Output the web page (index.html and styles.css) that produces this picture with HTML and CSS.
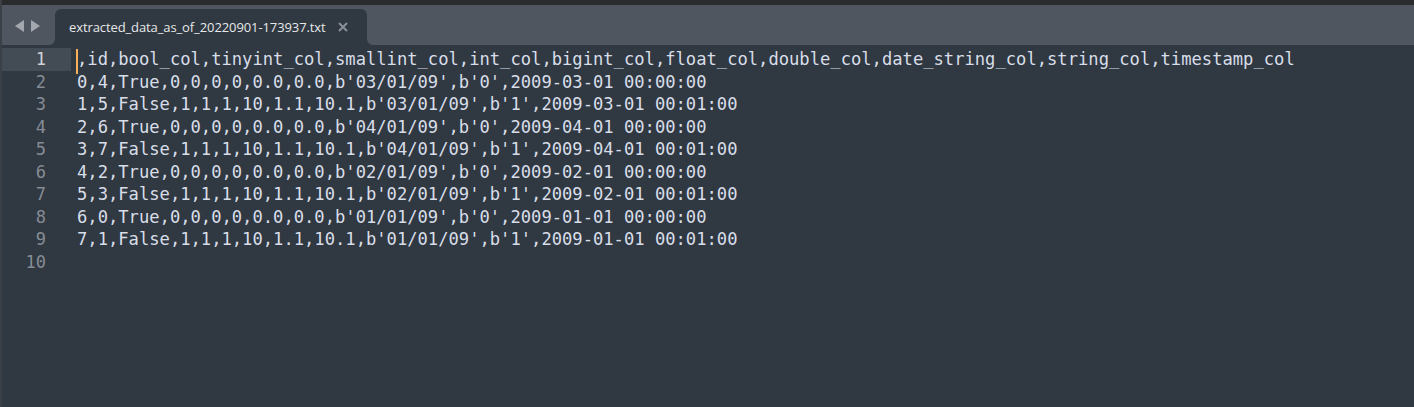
FILE: index.html
```html
<!DOCTYPE html>
<html>
<head>
<meta charset="utf-8">
<link rel="stylesheet" href="styles.css">
</head>
<body>
<div class="window">
  <div class="topstrip"></div>
  <div class="tabbar">
    <div class="nav">
      <svg class="arrows" width="30" height="14" viewBox="0 0 30 14">
        <polygon points="10,1 10,13 1,7" fill="#a3a8ae"/>
        <polygon points="17,1 17,13 26,7" fill="#a3a8ae"/>
      </svg>
    </div>
    <div class="tabwrap">
      <div class="tab">
        <span class="tabname">extracted_data_as_of_20220901-173937.txt</span>
        <svg class="close" width="10" height="10" viewBox="0 0 10 10">
          <path d="M1 1 L9 9 M9 1 L1 9" stroke="#8b9098" stroke-width="2"/>
        </svg>
      </div>
    </div>
    <div class="filler"></div>
  </div>
  <div class="editor">
    <div class="gutter">
      <div class="ln current">1</div>
      <div class="ln">2</div>
      <div class="ln">3</div>
      <div class="ln">4</div>
      <div class="ln">5</div>
      <div class="ln">6</div>
      <div class="ln">7</div>
      <div class="ln">8</div>
      <div class="ln">9</div>
      <div class="ln">10</div>
    </div>
    <div class="code">
      <div class="line"><span class="caret"></span>,id,bool_col,tinyint_col,smallint_col,int_col,bigint_col,float_col,double_col,date_string_col,string_col,timestamp_col</div>
      <div class="line">0,4,True,0,0,0,0,0.0,0.0,b'03/01/09',b'0',2009-03-01 00:00:00</div>
      <div class="line">1,5,False,1,1,1,10,1.1,10.1,b'03/01/09',b'1',2009-03-01 00:01:00</div>
      <div class="line">2,6,True,0,0,0,0,0.0,0.0,b'04/01/09',b'0',2009-04-01 00:00:00</div>
      <div class="line">3,7,False,1,1,1,10,1.1,10.1,b'04/01/09',b'1',2009-04-01 00:01:00</div>
      <div class="line">4,2,True,0,0,0,0,0.0,0.0,b'02/01/09',b'0',2009-02-01 00:00:00</div>
      <div class="line">5,3,False,1,1,1,10,1.1,10.1,b'02/01/09',b'1',2009-02-01 00:01:00</div>
      <div class="line">6,0,True,0,0,0,0,0.0,0.0,b'01/01/09',b'0',2009-01-01 00:00:00</div>
      <div class="line">7,1,False,1,1,1,10,1.1,10.1,b'01/01/09',b'1',2009-01-01 00:01:00</div>
      <div class="line"></div>
    </div>
  </div>
</div>
</body>
</html>
```
FILE: styles.css
```css
* { box-sizing: border-box; }
html, body {
  margin: 0;
  padding: 0;
  width: 1414px;
  height: 407px;
  overflow: hidden;
  background: #303841;
}
.window {
  width: 1414px;
  height: 407px;
  display: flex;
  flex-direction: column;
  background: #303841;
  border-left: 2px solid #3b4047;
}
.topstrip {
  height: 5px;
  background: #2a2b2c;
  flex: none;
}
.tabbar {
  height: 40px;
  flex: none;
  display: flex;
  background: #303841;
}
.nav {
  width: 53px;
  background: #4f5660;
  border-bottom-right-radius: 6px;
  display: flex;
  align-items: flex-start;
  padding: 14px 0 0 12px;
}
.arrows { display: block; }
.tabwrap {
  width: 312px;
  background: linear-gradient(#4f5660 0 50%, #303841 50% 100%);
  display: flex;
  flex-direction: column;
}
.tab {
  margin-top: 4px;
  flex: 1;
  background: #303841;
  border-radius: 6px 6px 0 0;
  display: flex;
  align-items: center;
  padding: 0 0 0 14px;
}
.tabname {
  font-family: "Open Sans", "Noto Sans", sans-serif;
  font-size: 13px;
  color: #e6e8ea;
  letter-spacing: -0.1px;
  width: 269px;
  white-space: nowrap;
}
.close { display: block; }
.filler {
  flex: 1;
  background: #4f5660;
  border-bottom-left-radius: 6px;
}
.editor {
  flex: 1;
  display: flex;
  padding-top: 3px;
  font-family: "DejaVu Sans Mono", monospace;
  font-size: 17.15px;
}
.gutter {
  width: 75px;
  flex: none;
}
.ln {
  height: 22.55px;
  line-height: 22.55px;
  width: 69px;
  padding-right: 25px;
  text-align: right;
  color: #858c95;
  font-size: 17px;
}
.ln.current {
  background: #434b55;
  color: #d0d4d9;
}
.code {
  flex: 1;
  color: #d8dee9;
}
.line {
  height: 22.55px;
  line-height: 22.55px;
  white-space: pre;
  position: relative;
}
.caret {
  position: absolute;
  left: -1px;
  top: 1px;
  width: 2px;
  height: 25px;
  background: #f9ae58;
}
```
